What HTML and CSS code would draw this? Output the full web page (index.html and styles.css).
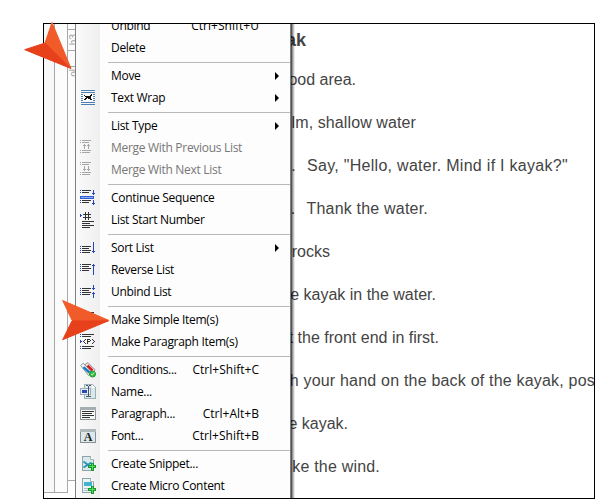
FILE: index.html
```html
<!DOCTYPE html>
<html lang="en">
<head>
<meta charset="utf-8">
<title>List context menu</title>
<link rel="stylesheet" href="styles.css">
</head>
<body>
<main class="editor">
  <div class="gutter">
    <div class="bar outer"></div>
    <div class="bar inner"></div>
    <div class="bar tags">
      <div class="tag-gap"></div>
      <div class="tag heading-tag"><span>h3</span></div>
      <div class="tag-space"></div>
      <div class="tag list-tag"><span>ol</span></div>
    </div>
  </div>
  <nav class="menu">
    <div class="item"><i></i><span class="label">Unbind</span><kbd>Ctrl+Shift+U</kbd></div>
    <div class="item"><i></i><span class="label">Delete</span></div>
    <hr>
    <div class="item"><i></i><span class="label">Move</span><b class="more"></b></div>
    <div class="item"><i><svg viewBox="0 1 16 16"><path fill="#fff" d="M3 5h11v7H3z"/><path class="line" stroke="#4b7fb5" d="M1 1.500h14M1 3.500h14M1 5.500h2M13 5.500h2M1 7.500h2M13 7.500h2M1 9.500h2M13 9.500h2M1 11.500h2M13 11.500h2M1 13.500h14M1 15.500h14"/><path fill="#111" d="M4 6h1v1h5V6h1V5h1v2h-1v3h1v1h-2v-1H8V9H7v1H6v1H4v-1h1V9h1V8H5V7H4z"/></svg></i><span class="label">Text Wrap</span><b class="more"></b></div>
    <hr>
    <div class="item"><i></i><span class="label">List Type</span><b class="more"></b></div>
    <div class="item off"><i><svg viewBox="0 1 16 16"><path class="line" stroke="#a6a6a6" d="M0 1.500h1M2 1.500h9M0 3.500h1M2 3.500h7M4.500 5v5M8.500 5v5M3 6.500h3M7 6.500h3M0 11.500h1M2 11.500h9M0 13.500h1M2 13.500h8"/></svg></i><span class="label">Merge With Previous List</span></div>
    <div class="item off"><i><svg viewBox="0 1 16 16"><path class="line" stroke="#a6a6a6" d="M0 1.500h1M2 1.500h9M0 3.500h1M2 3.500h7M4.500 5v5M8.500 5v5M3 8.500h3M7 8.500h3M0 11.500h1M2 11.500h9M0 13.500h1M2 13.500h8"/></svg></i><span class="label">Merge With Next List</span></div>
    <hr>
    <div class="item"><i><svg viewBox="0 0 16 16"><path fill="#315bd0" d="M0 6h14v3H0z"/><path class="line" stroke="#8eacf3" d="M1 7.500h12"/><path class="line" stroke="#333" d="M2 .5h9M2 2.500h7M2 10.500h9M2 12.500h7"/><path class="line" stroke="#2447b8" d="M0 .5h1M0 2.500h1M0 10.500h1M0 12.500h1M13.500 0v5M12 3.500h3M13.500 10v5M12 13.500h3"/></svg></i><span class="label">Continue Sequence</span></div>
    <div class="item"><i><svg viewBox="0 0 16 16"><path fill="#2447b8" d="M0 2h1v1h1v1H1v1H0z"/><path class="line" stroke="#333" d="M5.500 0v8M8.500 0v8M3 2.500h8M3 5.500h8M2 9.500h12M2 11.500h8M2 13.500h12M2 15.500h8"/></svg></i><span class="label">List Start Number</span></div>
    <hr>
    <div class="item"><i><svg viewBox="0 0 16 16"><path class="line" stroke="#333" d="M2 6.500h9M2 8.500h7M2 10.500h9M2 12.500h8"/><path class="line" stroke="#2447b8" d="M0 6.500h1M0 8.500h1M0 10.500h1M0 12.500h1M13.500 2v11M12 11.500h3"/></svg></i><span class="label">Sort List</span><b class="more"></b></div>
    <div class="item"><i><svg viewBox="0 0 16 16"><path class="line" stroke="#333" d="M2 2.500h9M2 4.500h7M2 6.500h9M2 8.500h7"/><path class="line" stroke="#2447b8" d="M0 2.500h1M0 4.500h1M0 6.500h1M0 8.500h1M13.500 2v11M12 3.500h3"/></svg></i><span class="label">Reverse List</span></div>
    <div class="item"><i><svg viewBox="0 0 16 16"><path class="line" stroke="#333" d="M2 4.500h9M2 6.500h7M2 8.500h9M2 10.500h8"/><path class="line" stroke="#2447b8" d="M0 4.500h1M0 6.500h1M0 8.500h1M0 10.500h1M13.500 1v5M12 4.500h3M13.500 8v6M12 9.500h3"/></svg></i><span class="label">Unbind List</span></div>
    <hr>
    <div class="item"><i><svg viewBox="0 0 16 16"><path class="line" stroke="#333" d="M2 .5h12"/></svg></i><span class="label">Make Simple Item(s)</span></div>
    <div class="item"><i><svg viewBox="0 0 16 16"><path class="line" stroke="#333" d="M2 .5h12M2 2.500h9M2 12.500h12M2 14.500h9"/><path class="line" stroke="#2447b8" d="M0 .5h1M0 2.500h1M0 12.500h1M0 14.500h1"/><path fill="#2447b8" d="M0 6h1v1h1v1H1v1H0z"/><path fill="#333" d="M5 5h1v1H5zM4 6h1v1H4zM3 7h1v1H3zM4 8h1v1H4zM5 9h1v1H5zM7 5h3v1h1v1h-1V6H8v1h2v1H8v2H7zM12 5h1v1h-1zM13 6h1v1h-1zM14 7h1v1h-1zM13 8h1v1h-1zM12 9h1v1h-1z"/></svg></i><span class="label">Make Paragraph Item(s)</span></div>
    <hr>
    <div class="item"><i><svg class="smooth" viewBox="0 0 16 16"><path fill="#eef4f4" stroke="#8b9899" d="M.7 3.500L3 1.200l9 8-3.500 4.300z"/><path fill="#f6eded" stroke="#9b8c8c" d="M5 2.500L8 .6l7 7.200-3 3.200z"/><path stroke="#1679c4" stroke-width="2.500" d="M3.500 5.200l6 5.500"/><path stroke="#d91f26" stroke-width="2.500" d="M7.500 3.500l5 5"/><circle cx="12.500" cy="12" r="3" fill="#39c044" stroke="#239331"/><path fill="none" stroke="#b7f4b5" d="M11 12l1.200 1 2-2.500"/></svg></i><span class="label">Conditions...</span><kbd>Ctrl+Shift+C</kbd></div>
    <div class="item"><i><svg viewBox="0 0 16 16"><path fill="#d9e8ea" stroke="#9bb0b4" d="M4.500.5h8l3 3v11h-11z"/><path fill="#fff" d="M12 1v3h3z"/><path fill="#e8edf5" stroke="#9cabc0" d="M.5 4.500h10v6H.5z"/><path fill="#2547b8" d="M2 6h5v3H2z"/><path class="line" stroke="#49555c" d="M6 1.500h2M9 1.500h2M8.500 2v11M6 12.500h5"/></svg></i><span class="label">Name...</span></div>
    <div class="item"><i><svg viewBox="0 0 16 16"><path fill="#f7f8f8" stroke="#8c9294" d="M.5 2.500h15v11H.5z"/><path fill="#a5adb0" d="M0 1h16v3H0z"/><path class="line" stroke="#333" d="M2 5.500h12M2 7.500h10M2 9.500h12M2 11.500h8"/></svg></i><span class="label">Paragraph...</span><kbd>Ctrl+Alt+B</kbd></div>
    <div class="item"><i><svg viewBox="0 0 16 16"><path fill="#dce8eb" stroke="#879195" d="M.5 2.500h15v12H.5z"/><path fill="#b0b8bb" d="M0 1h16v3H0z"/><text x="8" y="12.700" text-anchor="middle" class="letter">A</text></svg></i><span class="label">Font...</span><kbd>Ctrl+Shift+B</kbd></div>
    <hr>
    <div class="item"><i><svg viewBox="0 0 16 16"><path fill="#d8eaec" stroke="#8fa4a8" d="M2.500.5h8l3 3v11h-11z"/><path fill="#f8ffff" stroke="#a9b9bb" d="M10.500.5v3h3"/><path class="smooth" stroke="#2994b8" stroke-width="2" d="M3.500 5.500l8 6M3.500 11.500l8-5"/><path fill="#16962b" d="M9 9h2V7h3v2h2v3h-2v3h-3v-3H8V9z"/><path class="line" stroke="#55dd54" d="M9 10.500h6M12.500 8v6"/></svg></i><span class="label">Create Snippet...</span></div>
    <div class="item"><i><svg viewBox="0 0 16 16"><path fill="#e8f4f5" stroke="#8fa4a8" d="M2.500.5h8l3 3v11h-11z"/><path fill="#fff" stroke="#a9b9bb" d="M10.500.5v3h3"/><path fill="#43b2cf" d="M4 4h8v4H4z"/><path class="line" stroke="#a9c2c7" d="M4 10.500h6M4 12.500h5"/><path fill="#16962b" d="M9 10h2V8h3v2h2v3h-2v3h-3v-3H8v-3z"/><path class="line" stroke="#55dd54" d="M9 11.500h6M12.500 9v6"/></svg></i><span class="label">Create Micro Content</span></div>
  </nav>
  <article class="document">
    <h3>ak</h3>
    <p class="area">ood area.</p>
    <p class="calm">lm, shallow water</p>
    <p class="hello"><span class="marker">.</span>Say, "Hello, water. Mind if I kayak?"</p>
    <p class="thank"><span class="marker">.</span>Thank the water.</p>
    <p class="rocks">rocks</p>
    <p class="place">e kayak in the water.</p>
    <p class="front">t the front end in first.</p>
    <p class="push">h your hand on the back of the kayak, pos</p>
    <p class="board">e kayak.</p>
    <p class="wind">ke the wind.</p>
  </article>
</main>
<svg class="pointers" viewBox="0 0 595 499">
  <path fill="#f15a29" stroke="#f15a29" d="M52 22.500L71 68.500 45 43z"/>
  <path fill="#e7411b" stroke="#e7411b" d="M45 43L71 68.500 24.700 49.700z"/>
  <path fill="#f15a29" stroke="#f15a29" d="M62.700 300.500L108.500 320.300H72z"/>
  <path fill="#e7411b" stroke="#e7411b" d="M72 320.800h36.500L62.700 339.700z"/>
</svg>
</body>
</html>
```
FILE: styles.css
```css
* { box-sizing: border-box; }
body { margin: 0; width: 595px; height: 499px; overflow: hidden; background: #fff; }
.editor {
  display: flex;
  width: 552px;
  height: 476px;
  margin: 23px 0 0 43px;
  border: 1px solid #000;
  overflow: hidden;
}
.gutter { display: flex; width: 31px; flex: none; align-items: flex-start; }
.bar { height: 469px; border-bottom: 1px solid #a8a8a8; border-right: 1px solid #a8a8a8; }
.outer { width: 11px; background: #f8f8f8; }
.inner { width: 13px; background: #fcfcfc; }
.tags { width: 7px; height: 457px; border-right: 0; overflow: hidden; background: #fcfcfc; }
.tag-gap { height: 5px; }
.tag { border-top: 1px solid #a8a8a8; font: 10px/9px "Liberation Sans", sans-serif; color: #a0a0a0; }
.tag span { display: block; writing-mode: vertical-rl; transform: rotate(180deg); width: 9px; margin-left: 1px; }
.heading-tag { height: 22px; padding-top: 4px; border-bottom: 1px solid #a8a8a8; }
.tag-space { height: 15px; }
.list-tag { padding-top: 2px; }
.menu {
  position: relative;
  z-index: 1;
  flex: none;
  width: 216px;
  height: 500px;
  margin-top: -9px;
  border: solid #808080;
  border-width: 0 1px;
  background: linear-gradient(90deg, #fafafa, #efefef 24px, #fdfdfd 24px);
  box-shadow: 1px 0 rgba(0,0,0,.43), 2px 0 rgba(0,0,0,.25), 3px 0 rgba(0,0,0,.17), 4px 0 rgba(0,0,0,.08);
  font: 12px/22px "Open Sans", sans-serif;
  color: #000;
}
.item { display: flex; align-items: center; height: 22px; padding: 0 11px 0 4px; white-space: nowrap; }
.item i { width: 16px; height: 16px; margin-right: 15px; flex: none; }
.item svg { display: block; width: 16px; height: 16px; shape-rendering: crispEdges; }
.item svg.smooth, .smooth { shape-rendering: auto; }
.line { fill: none; }
.letter { font: bold 12px "Liberation Serif", serif; fill: #222; }
.label { letter-spacing: -.3px; }
.item kbd { margin-left: auto; margin-right: 20px; font: inherit; letter-spacing: .02px; }
.more { margin-left: auto; border: solid transparent; border-width: 4px 0 4px 4px; border-left-color: #000; }
.off { color: #777; }
.menu hr { height: 1px; margin: 3px 0 2px 32px; border: 0; background: #b9b9b9; }
.document { width: 304px; flex: none; margin-left: -1px; padding-top: 3px; overflow: hidden; font: 16px/26px "Liberation Sans", Arial, sans-serif; color: #444; }
.document h3, .document p { display: flex; justify-content: flex-end; height: 26px; margin: 0 0 17px; white-space: nowrap; }
.document h3 { width: 16px; margin-bottom: 14px; font-size: 18px; }
.marker { margin-right: 11px; }
.area { width: 66px; }
.calm { width: 126px; letter-spacing: .1px; }
.hello { width: 278px; letter-spacing: .29px; }
.thank { width: 138px; letter-spacing: .2px; }
.rocks { width: 40px; }
.place { width: 146px; }
.front { width: 149px; }
.push { width: 305px; letter-spacing: .2px; }
.board { width: 58px; }
.wind { width: 90px; letter-spacing: .2px; }
.pointers { position: absolute; z-index: 2; inset: 0; width: 595px; height: 499px; stroke-linejoin: round; }
```
